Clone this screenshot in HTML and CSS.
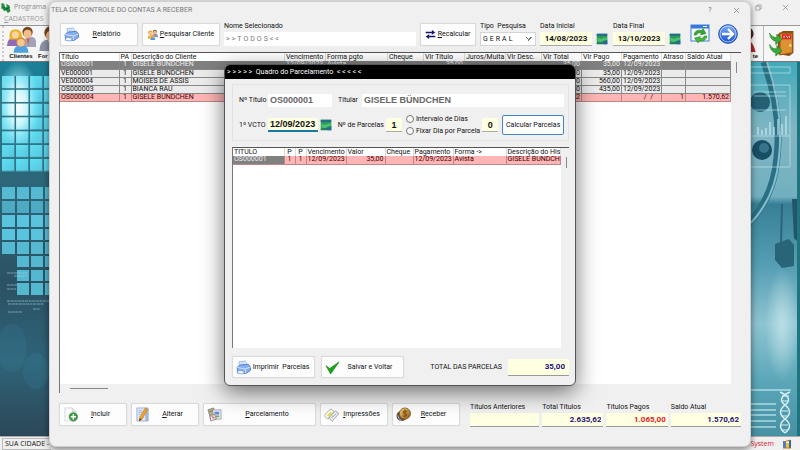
FILE: index.html
```html
<!DOCTYPE html>
<html lang="pt-BR">
<head>
<meta charset="utf-8">
<meta name="viewport" content="width=device-width, initial-scale=1">
<title>Tela de Controle do Contas a Receber</title>
<link rel="stylesheet" href="styles.css">
</head>
<body>
<svg class="sprites" aria-hidden="true">
  <defs>
    <linearGradient id="gBlue" x1="0" y1="0" x2="0" y2="1"><stop offset="0" stop-color="#7db0fa"/><stop offset="1" stop-color="#164fd0"/></linearGradient>
    <linearGradient id="gGold" x1="0" y1="0" x2="1" y2="1"><stop offset="0" stop-color="#f8d478"/><stop offset="1" stop-color="#8a5414"/></linearGradient>
    <symbol id="printer" viewBox="0 0 16 16">
      <path d="M3 2l7-1 2 5-7 2z" fill="#fff" stroke="#7ba4e0" stroke-width=".8"/>
      <path d="M4.500 3.500l4.500-.7M5 5l4.500-.8" stroke="#8fb6ee" stroke-width=".8"/>
      <path d="M1 8l3-2.500 9-1 2.500 3v3.500l-5 3.500L2 13z" fill="#86aef0" stroke="#3a68c4" stroke-width=".8"/>
      <path d="M1 8l9 1.500 5.500-2M10 9.500V14" stroke="#dce9ff" stroke-width=".9" fill="none"/>
      <path d="M3 11l6 1-2 3-6-1z" fill="#f6faff" stroke="#5a86d6" stroke-width=".7"/>
    </symbol>
    <symbol id="people" viewBox="0 0 16 16">
      <path d="M1 14q0-5 4-5t4 5z" fill="#e8b434"/><circle cx="5" cy="5.500" r="3.200" fill="#e0a020"/><circle cx="5.200" cy="6" r="2.100" fill="#f6cf9c"/>
      <path d="M8 12q0-5 4-5t4 5z" fill="#8c94b0"/><circle cx="11.500" cy="4" r="2.800" fill="#7a4a20"/><circle cx="11.500" cy="4.800" r="2.100" fill="#f2c090"/>
      <path d="M5 16q0-4 3.500-4t3.500 4z" fill="#4f9fe0"/><circle cx="8.500" cy="10" r="2.200" fill="#e2a45c"/>
    </symbol>
    <symbol id="swap" viewBox="0 0 16 16">
      <path d="M1 4h9V1.500L15 5l-5 3.500V6.300H1zM15 9.700H6V7.500L1 11l5 3.500V12h9z" fill="#15156c"/>
    </symbol>
    <symbol id="calendar" viewBox="0 0 16 16">
      <path d="M1 1h14v13.500H1z" fill="#2d9a56"/><path d="M1 1h14v3H1z" fill="#256f8c"/>
      <path d="M2 6q4 3 7 1t6 0v3q-4-1-6 1t-7 0z" fill="#49c271"/><path d="M1 13l8-1 6-3v6H1z" fill="#237a62"/><path d="M10 11h5v4h-5z" fill="#2c66a0"/>
    </symbol>
    <symbol id="refresh" viewBox="0 0 20 20">
      <rect x="1" y="1" width="18" height="16" fill="#f5fbff" stroke="#3d80d8"/><path d="M1 1h18v3.500H1z" fill="#3878d8"/><path d="M13 2.500h4" stroke="#fff"/>
      <path d="M4 11q1-6 8-4.500l1-2 3 5-5.500 1.500 1-2Q7 8 6.500 11z" fill="#36a82d" stroke="#17701b" stroke-width=".5"/>
      <path d="M17 12q-1 6-8 5l-1 2-3.500-5 6-1.500-1.200 2q4 .5 5-2.500z" fill="#49bc36" stroke="#17701b" stroke-width=".5"/>
    </symbol>
    <symbol id="go" viewBox="0 0 20 20">
      <circle cx="10" cy="10" r="9.300" fill="url(#gBlue)" stroke="#1d4cae"/><circle cx="10" cy="10" r="8" fill="none" stroke="#c7dcff" stroke-width=".8"/>
      <path d="M4 10h11M10 5l5 5-5 5" fill="none" stroke="#fff" stroke-width="2.300"/>
    </symbol>
    <symbol id="add" viewBox="0 0 16 16">
      <path d="M2 1h8l4 4v10H2z" fill="#fafafa" stroke="#d0d0d0" stroke-width=".8"/><path d="M10 1v4h4" fill="#e4e4e4" stroke="#c4c4c4" stroke-width=".6"/>
      <circle cx="11" cy="10.500" r="4.500" fill="#3c9d45" stroke="#237430" stroke-width=".6"/><path d="M11 7.700v5.600M8.200 10.500h5.600" stroke="#fff" stroke-width="1.600"/>
    </symbol>
    <symbol id="edit" viewBox="0 0 16 16">
      <path d="M2 1h12v14H2z" fill="#dce6f8" stroke="#8fa4cc" stroke-width=".8"/><path d="M4 4h4M4 6h4M4 8h2" stroke="#94a8d0" stroke-width=".8"/><path d="M11 2h3v13h-3z" fill="#a4b4d4"/>
      <path d="M11 1l2.500 1.500L7.500 13l-3 2 .5-3.500z" fill="#f4a425" stroke="#b86a14" stroke-width=".6"/><path d="M5 12l2 1.200L4.500 15z" fill="#503818"/>
    </symbol>
    <symbol id="papers" viewBox="0 0 16 16">
      <path d="M1 3l6-2 3 9-6 3z" fill="#a8ba80" stroke="#667" stroke-width=".7"/><path d="M6 3h9v10H7z" fill="#ece8f4" stroke="#889" stroke-width=".7"/>
      <path d="M8 5h5v3H8z" fill="#5c90d4"/><path d="M9 9h4v2H9z" fill="#70ad58"/><path d="M3 9l5-1 2 5-6 2z" fill="#e7d7e0" stroke="#866" stroke-width=".7"/><path d="M5 10l3 2M3 5l3-1" stroke="#c4494e"/>
    </symbol>
    <symbol id="slips" viewBox="0 0 16 16">
      <path d="M0 9l7-7 4 3-7 8z" fill="#fbfbf2" stroke="#8c8c7c" stroke-width=".7"/><path d="M3 9l4-4 2 1.500-4 4z" fill="#e2dc52"/>
      <path d="M5 12l7-8 4 3-7 8z" fill="#ececec" stroke="#888" stroke-width=".7"/><path d="M9 11l4-4M7.500 12l2-2" stroke="#999" stroke-width=".8"/>
    </symbol>
    <symbol id="coins" viewBox="0 0 16 16">
      <circle cx="6" cy="9.500" r="5.500" fill="#5c4c40"/><circle cx="9.500" cy="7" r="6" fill="url(#gGold)" stroke="#805018" stroke-width=".8"/><path d="M12 4.500H8.500q-2 2 1 2.500t1 2.500H7M9.700 3v8" fill="none" stroke="#805018" stroke-width="1.100"/><path d="M2 9q0 4 4 5.500" fill="none" stroke="#b8c0d0"/>
    </symbol>
    <symbol id="check" viewBox="0 0 16 16"><path d="M1 6l4 3 10-7L6 15z" fill="#18a817" stroke="#0b6f10" stroke-width=".6"/></symbol>
    <symbol id="clients" viewBox="0 0 32 28">
      <path d="M18 22q0-11 8-11t6 11z" fill="#a4a2ba"/><circle cx="23" cy="6" r="5.500" fill="#75451e"/><circle cx="23" cy="8" r="4.300" fill="#f3bd88"/><path d="M22 13h3l-1 7z" fill="#d35a50"/>
      <path d="M1 21q0-9 8-9t8 9z" fill="#9269b4"/><path d="M4 14Q2 3 10 3t7 11z" fill="#e9b521"/><circle cx="10" cy="9" r="3.800" fill="#fbd2a4"/>
      <path d="M8 28q0-8 8-8t8 8z" fill="#4fa2dd"/><circle cx="16" cy="16.500" r="5" fill="#d8923d"/><circle cx="16" cy="17.500" r="4" fill="#f6c68c"/>
    </symbol>
    <symbol id="supplier" viewBox="0 0 28 28"><path d="M0 26q0-12 10-12t12 12z" fill="#8c92a8"/><path d="M9 14l4 0-2 9z" fill="#fff"/><circle cx="12" cy="7" r="7" fill="#70421c"/><circle cx="12" cy="10" r="5.200" fill="#f3bd88"/></symbol>
    <symbol id="exit" viewBox="0 0 26 26">
      <path d="M9 4l5-3h10v21l-4 3-11-2z" fill="#8a4d15"/><path d="M11 3h12v19l-12 2z" fill="#dc9232" stroke="#965414"/><rect x="13" y="4" width="9" height="5" fill="#d62b2b"/><path d="M15 5.500v2M17 5.500l1.500 2M20 5.500v2" stroke="#fff" stroke-width=".8"/><circle cx="21" cy="15" r="1.200" fill="#faea9c"/>
      <path d="M1 3q3 5 7 4V4l5 5-6 5v-3Q2 10 1 3zM1 14q3 5 7 4v-3l5 5-6 5v-3q-5-1-6-8z" fill="#3da93a" stroke="#20782a" stroke-width=".6"/>
    </symbol>
  </defs>
</svg>

<div class="desktop">
  <header class="app-title">
    <svg class="app-logo" viewBox="0 0 12 12"><path d="M1 1l3 1 1 4 2-1-1-3 4 2v3l1 3-3 2-2-3-2 1-2-3-1 1z" fill="#218f3f"/><path d="M3 5l3 3 4-2" stroke="#0d5524" fill="none"/></svg>
    <span>Programa</span>
    <span class="app-controls"><svg viewBox="0 0 8 8"><path d="M1 2.500h4.500V7H1zM2.500 2.500V1H7v4.500H5.500" fill="none" stroke="#909090" stroke-width=".8"/></svg><svg viewBox="0 0 8 8"><path d="M1 1l6 6M7 1L1 7" stroke="#888" stroke-width=".8"/></svg></span>
  </header>
  <nav class="app-menu"><a href="#cadastros"><u>C</u>ADASTROS</a></nav>
  <div class="app-toolbar">
    <span class="grip"></span>
    <button class="tool" type="button"><svg><use href="#clients"/></svg>Clientes</button>
    <button class="tool next" type="button"><svg><use href="#supplier"/></svg>For</button>
    <span class="spacer"></span>
    <button class="tool suporte" type="button"><svg viewBox="0 0 28 28"><path d="M4 27q0-14 10-14t13 14z" fill="#b3262b"/><circle cx="18" cy="8" r="7" fill="#4a2520"/></svg>te</button>
    <button class="tool exit" type="button" aria-label="Sair"><svg><use href="#exit"/></svg></button>
  </div>
  <div class="wallpaper">
    <svg class="wall-left" viewBox="0 0 60 374" preserveAspectRatio="xMinYMin slice">
      <defs>
        <linearGradient id="wl" x1="0" y1="0" x2="0" y2="1"><stop offset="0" stop-color="#1c7f98"/><stop offset=".3" stop-color="#2c687a"/><stop offset=".6" stop-color="#2c5264"/><stop offset=".8" stop-color="#2f6378"/><stop offset="1" stop-color="#2c4858"/></linearGradient>
        <radialGradient id="glow"><stop offset="0" stop-color="#fff"/><stop offset=".4" stop-color="#dffcff" stop-opacity=".85"/><stop offset="1" stop-color="#80f0ff" stop-opacity="0"/></radialGradient>
        <linearGradient id="tile" x1="0" y1="0" x2="1" y2="1"><stop offset="0" stop-color="#5de2f2"/><stop offset="1" stop-color="#5ac4e0"/></linearGradient>
        <pattern id="tiles" x="2" y="14" width="14" height="13.800" patternUnits="userSpaceOnUse"><rect width="12.600" height="12.300" fill="url(#tile)"/></pattern>
      </defs>
      <rect width="60" height="374" fill="url(#wl)"/>
      <path d="M2 14h58v96H2z" fill="url(#tiles)"/>
      <ellipse cx="18" cy="44" rx="22" ry="46" fill="url(#glow)"/>
      <path d="M1 14v96M15.300 14v96M29.300 14v96M43.300 14v96M0 27h60M0 40.800h60M0 54.600h60M0 68.400h60M0 82.200h60M0 96h60" stroke="#2f7588" stroke-width="1.500"/>
      <g fill="#5ac3dd"><path d="M2 125h13v12H2zM17 125h12v12H17zM31 125h12v12H31zM45 125h15v12H45z" opacity=".9"/><path d="M2 139h13v12H2zM17 139h12v12H17zM31 139h12v12H31zM45 139h15v12H45z" opacity=".75"/><path d="M2 153h13v12H2zM17 153h12v12H17zM31 153h12v12H31zM45 153h15v12H45zM2 167h13v11H2zM17 167h12v11H17zM31 167h12v11H31zM45 167h15v11H45z"/><path d="M2 180h13v12H2zM17 180h12v12H17zM31 180h12v12H31zM45 180h15v12H45zM17 194h12v11H17zM31 194h12v11H31zM45 194h15v11H45zM17 208h12v11H17zM31 208h12v11H31zM45 208h15v11H45zM17 221h12v12H17zM31 221h12v12H31zM45 221h15v12H45z" opacity=".9"/></g>
      <path d="M7 211h20M14 214h13M7 223h10M7 227h9M7 239h50M8 242h36M8 250h14M33 247h7" stroke="#a5dce8" stroke-width="1" opacity=".6" stroke-dasharray="3 .6"/>
      <ellipse cx="12" cy="286" rx="15" ry="24" fill="#3587a3" opacity=".2"/><ellipse cx="36" cy="309" rx="13" ry="18" fill="#3587a3" opacity=".2"/>
    </svg>
    <svg class="wall-right" viewBox="0 0 60 374" preserveAspectRatio="xMaxYMin slice">
      <defs><linearGradient id="wr" x1="0" y1="0" x2="0" y2="1"><stop offset="0" stop-color="#43a9ba"/><stop offset=".18" stop-color="#80b5c3"/><stop offset=".36" stop-color="#72b0bf"/><stop offset=".38" stop-color="#367f95"/><stop offset=".55" stop-color="#579fb4"/><stop offset=".7" stop-color="#8ec4d1"/><stop offset=".85" stop-color="#5ba7b9"/><stop offset="1" stop-color="#4790a4"/></linearGradient>
      <radialGradient id="haze"><stop offset="0" stop-color="#c6e5eb" stop-opacity=".8"/><stop offset="1" stop-color="#c6e5eb" stop-opacity="0"/></radialGradient></defs>
      <rect width="60" height="374" fill="url(#wr)"/>
      <path d="M24 0q18 50 13 95-3 39-28 66" fill="none" stroke="#2a7084" stroke-width="7"/><path d="M27 0q17 50 12 95-3 39-28 66" fill="none" stroke="#86bccb" stroke-width="2"/>
      <path d="M52 137h8v45l-6-6z" fill="#24546a"/><path d="M42 142l-1 40" stroke="#2d6479" stroke-width="2"/><path d="M35 182l14-5 5 6v21l-12 2-7-8z" fill="#2a6479"/>
      <circle cx="20" cy="40" r="10" fill="#245f74"/><circle cx="22" cy="88" r="10" fill="#194f66"/><circle cx="24" cy="86" r="5" fill="#37748a"/>
      <g stroke="#c8f0f4" fill="none" opacity=".75"><path d="M10 5h40v6H10M10 23h40v82H10M10 74h40M14 30h32M14 34h32M14 48h32" stroke-width=".8"/><path d="M18 73v-8M22 73v-5M26 73v-7M30 73V60M34 73v-8M38 73V57M42 73V62M46 73V54" stroke-width="1.500"/><path d="M8 328h43M8 342h28M8 348h28M8 353h28M8 359h28M8 365h28" stroke-width="1.500"/></g>
      <ellipse cx="42" cy="263" rx="17" ry="57" fill="url(#haze)"/>
      <path d="M40 330q14 6 5 13t0 14 0 14M50 330q-14 6-5 13t0 14 0 14" fill="none" stroke="#d5f0f4" stroke-width="1.500"/><path d="M42 334h7M42 339h6M41 349h7M41 354h7M41 363h7M41 368h7" stroke="#d5f0f4"/>
      <path d="M58.500 0v374" stroke="#1f7480" stroke-width="3"/>
    </svg>
  </div>
  <footer class="app-status"><span class="city">SUA CIDADE -</span><span class="system">System</span><svg viewBox="0 0 10 10"><path d="M1 2h3v7H1z" fill="#4c7ec9"/><path d="M4 4h3v5H4z" fill="#ecc43a"/><path d="M7 1h2v8H7z" fill="#3867a6"/><path d="M1 9h8M2 3l6-2" stroke="#af7b29"/></svg></footer>
</div>

<main class="window">
  <header class="window-title"><h1>TELA DE CONTROLE DO CONTAS A RECEBER</h1><button type="button" aria-label="Ajuda">?</button><button type="button" aria-label="Fechar"><svg viewBox="0 0 8 8"><path d="M1 1l6 6M7 1L1 7" stroke="#777" stroke-width=".8"/></svg></button></header>

  <form class="filters">
    <button class="btn w-report" type="button"><svg><use href="#printer"/></svg><span><u>R</u>elatório</span></button>
    <button class="btn w-report" type="button"><svg class="small"><use href="#people"/></svg><span><u>P</u>esquisar Cliente</span></button>
    <div class="field grow"><label for="nome">Nome Selecionado</label><input id="nome" class="spaced" value="&gt;&gt;TODOS&lt;&lt;"></div>
    <button class="btn w-recalc" type="button"><svg class="small"><use href="#swap"/></svg><span><u>R</u>ecalcular</span></button>
    <div class="field w-type"><label for="tipo">Tipo&nbsp; Pesquisa</label><select id="tipo"><option>GERAL</option></select></div>
    <div class="field"><label for="ini">Data Inicial</label><div class="date"><input id="ini" value="14/08/2023"><svg><use href="#calendar"/></svg></div></div>
    <div class="field"><label for="fim">Data Final</label><div class="date"><input id="fim" value="13/10/2023"><svg><use href="#calendar"/></svg></div></div>
    <button class="round" type="button" aria-label="Atualizar"><svg><use href="#refresh"/></svg></button>
    <button class="round" type="button" aria-label="Avançar"><svg><use href="#go"/></svg></button>
  </form>

  <section class="grid-box">
    <div class="grid-area">
      <table class="grid main-grid">
        <thead><tr><th>Título</th><th>PA</th><th>Descrição do Cliente</th><th>Vencimento</th><th>Forma pgto</th><th>Cheque</th><th>Vlr Título</th><th>Juros/Multa</th><th>Vlr Desc.</th><th>Vlr Total</th><th>Vlr Pago</th><th>Pagamento</th><th>Atraso</th><th>Saldo Atual</th></tr></thead>
        <tbody>
          <tr class="selected"><td>OS000001</td><td>1</td><td>GISELE BÜNDCHEN</td><td>12/09/2023</td><td>Avista</td><td></td><td>35,00</td><td></td><td></td><td>35,00</td><td>35,00</td><td>12/09/2023</td><td></td><td></td></tr>
          <tr><td>VE000001</td><td>1</td><td>GISELE BÜNDCHEN</td><td></td><td></td><td></td><td></td><td></td><td></td><td>35,00</td><td>35,00</td><td>12/09/2023</td><td></td><td></td></tr>
          <tr><td>VE000004</td><td>1</td><td>MOISES DE ASSIS</td><td></td><td></td><td></td><td></td><td></td><td></td><td>560,00</td><td>560,00</td><td>12/09/2023</td><td></td><td></td></tr>
          <tr><td>OS000003</td><td>1</td><td>BIANCA RAU</td><td></td><td></td><td></td><td></td><td></td><td></td><td>435,00</td><td>435,00</td><td>12/09/2023</td><td></td><td></td></tr>
          <tr class="open"><td>OS000004</td><td>1</td><td>GISELE BÜNDCHEN</td><td></td><td></td><td></td><td></td><td></td><td></td><td>1.570,62</td><td></td><td>/ &nbsp;/ &nbsp; &nbsp;</td><td>1</td><td>1.570,62</td></tr>
        </tbody>
      </table>
    </div>
    <div class="vbar"></div>
    <div class="hbar"></div>
  </section>

  <footer class="actions">
    <button class="btn w-s" type="button"><svg><use href="#add"/></svg><span><u>I</u>ncluir</span></button>
    <button class="btn w-s" type="button"><svg><use href="#edit"/></svg><span><u>A</u>lterar</span></button>
    <button class="btn w-l" type="button"><svg><use href="#papers"/></svg><span><u>P</u>arcelamento</span></button>
    <button class="btn w-s" type="button"><svg><use href="#slips"/></svg><span><u>I</u>mpressões</span></button>
    <button class="btn w-s" type="button"><svg><use href="#coins"/></svg><span><u>R</u>eceber</span></button>
    <div class="totals">
      <div class="field"><label for="ant">Títulos Anteriores</label><input id="ant" class="total"></div>
      <div class="field"><label for="tot">Total Títulos</label><input id="tot" class="total" value="2.635,62"></div>
      <div class="field"><label for="pag">Títulos Pagos</label><input id="pag" class="total red" value="1.065,00"></div>
      <div class="field"><label for="sal">Saldo Atual</label><input id="sal" class="total" value="1.570,62"></div>
    </div>
  </footer>
</main>

<section class="dialog" role="dialog" aria-labelledby="dlg">
  <h2 id="dlg">&gt; &gt; &gt; &gt; &gt;&nbsp; Quadro do Parcelamento &nbsp;&lt; &lt; &lt; &lt; &lt;</h2>
  <form class="dialog-body">
    <fieldset class="panel">
      <div class="line">
        <label class="lead" for="num">Nº Título</label><input id="num" class="plain w-num" value="OS000001">
        <label class="next-label" for="titular">Titular</label><input id="titular" class="plain grow" value="GISELE BÜNDCHEN">
      </div>
      <div class="line second">
        <label class="lead" for="vcto">1º VCTO</label><input id="vcto" class="yellow w-vcto" value="12/09/2023"><svg class="cal"><use href="#calendar"/></svg>
        <label class="next-label" for="parc">Nº de Parcelas</label><input id="parc" class="yellow w-one" value="1">
        <div class="radios"><label><input type="radio" name="modo">Intervalo de Dias</label><label><input type="radio" name="modo">Fixar Dia por Parcela</label></div>
        <input class="yellow w-one" aria-label="Dias" value="0">
        <button class="calc" type="button">Calcular Parcelas</button>
      </div>
    </fieldset>
    <div class="grid-box parcels">
      <div class="grid-area">
        <table class="grid sub-grid">
          <thead><tr><th>TITULO</th><th>P</th><th>P</th><th>Vencimento</th><th>Valor</th><th>Cheque</th><th>Pagamento</th><th>Forma -&gt;</th><th>Descrição do His</th></tr></thead>
          <tbody><tr class="open"><td class="current">OS000001</td><td>1</td><td>1</td><td>12/09/2023</td><td>35,00</td><td></td><td>12/09/2023</td><td>Avista</td><td>GISELE BUNDCH</td></tr></tbody>
        </table>
      </div>
      <div class="vbar"></div>
    </div>
    <div class="dialog-actions">
      <button class="btn" type="button"><svg><use href="#printer"/></svg><span>Imprimir&nbsp; Parcelas</span></button>
      <button class="btn" type="button"><svg><use href="#check"/></svg><span>Salvar e Voltar</span></button>
      <label for="sum">TOTAL DAS PARCELAS</label><input id="sum" class="total" value="35,00">
    </div>
  </form>
</section>
</body>
</html>
```
FILE: styles.css
```css
:root {
  --ui: Roboto, "Liberation Sans", sans-serif;
  --face: #f0f0f0;
  --cream: #ffffe1;
  --navy: #20107a;
}
* { box-sizing: border-box; }
body { margin: 0; height: 100vh; overflow: hidden; background: #ececec; font: 7px/9px var(--ui); color: #111; }
button, input, select { font: inherit; color: inherit; margin: 0; padding: 0; border: 0; border-radius: 0; min-width: 0; }
button { background: none; }
h1, h2 { margin: 0; font-weight: normal; }
.sprites { position: absolute; width: 0; height: 0; }
svg { flex: none; }

/* Application behind the windows */
.desktop { height: 100%; display: flex; flex-direction: column; background: #f1f1f1; }
.app-title { display: flex; align-items: center; gap: 2px; height: 14px; font: 7px/10px "Open Sans", sans-serif; color: #8c8c8c; }
.app-logo { width: 12px; height: 11px; }
.app-controls { margin-left: auto; display: flex; gap: 20px; padding-right: 11px; }
.app-controls svg { width: 7px; height: 7px; }
.app-menu { height: 11px; padding-left: 4px; font: 7px/10px "Open Sans", sans-serif; }
.app-menu a { color: #999; text-decoration: none; }
.app-toolbar { display: flex; gap: 2px; height: 37px; border-top: 1px solid #999; border-bottom: 1px solid #777; background: #f6f6f6; padding-right: 2px; }
.grip { width: 4px; border-right: 2px dotted #ccc; }
.spacer { flex: 1; }
.tool { display: flex; flex-direction: column; align-items: center; font: bold 6px/7px "Liberation Sans", sans-serif; }
.tool svg { width: 30px; height: 27px; }
.tool.next { align-items: flex-start; }
.tool.suporte { width: 34px; align-items: flex-end; padding-right: 5px; border-right: 1px solid #bbb; }
.tool.exit { justify-content: center; width: 32px; }
.wallpaper { flex: 1; min-height: 0; display: flex; justify-content: space-between; background: #3c8296; }
.wallpaper svg { width: 60px; height: 100%; }
.app-status { display: flex; align-items: center; gap: 8px; height: 14px; padding: 0 8px 0 2px; border-top: 1px solid #aaa; background: #f0f0f0; font: 7px/10px "Open Sans", sans-serif; }
.city { border: 1px solid #bbb; border-right: 0; padding: 0 2px; }
.system { margin-left: auto; color: #d8232e; }
.app-status svg { width: 10px; height: 10px; }

/* Receivables window */
.window { position: absolute; inset: 1px 49px 3px; display: flex; flex-direction: column; background: var(--face); border: 1px solid #cfcfcf; border-radius: 7px; box-shadow: 0 2px 7px rgba(0, 0, 0, .5); padding: 0 9px 20px; }
.window-title { display: flex; align-items: center; height: 16px; color: #777; }
.window-title h1 { flex: 1; margin-left: -8px; font: 7px/10px var(--ui); }
.window-title button { width: 26px; height: 12px; display: grid; place-items: center; }
.window-title button:last-child { margin-right: -8px; }
.window-title svg { width: 7px; height: 7px; }
.filters { display: flex; align-items: center; gap: 4px; height: 32px; padding: 0 3px 0 1px; }
.btn { display: flex; align-items: center; height: 23px; padding: 0 3px; background: #fdfdfd; border: 1px solid #dadada; border-radius: 2px; box-shadow: 0 0 1px #ccc; }
.btn svg { width: 15px; height: 15px; }
.btn svg.small { width: 11px; height: 11px; margin-left: 1px; }
.btn span { flex: 1; text-align: center; white-space: nowrap; }
.w-report { width: 78px; }
.w-recalc { width: 56px; }
.field { display: flex; flex-direction: column; gap: 1px; }
.field label, .line label, .dialog-actions label { white-space: nowrap; }
.grow { flex: 1; }
.field input { height: 14px; padding: 0 2px; background: #fff; }
input.spaced { color: #777; letter-spacing: 2px; }
.w-type { width: 56px; }
select { height: 14px; padding: 0 2px; background: #fff; border: 1px solid #d4d4d4; letter-spacing: 2px; appearance: none; background-image: linear-gradient(45deg, transparent 50%, #777 50%, #777 64%, transparent 64%), linear-gradient(-45deg, transparent 50%, #777 50%, #777 64%, transparent 64%); background-size: 4px 4px; background-position: right 6px center, right 3px center; background-repeat: no-repeat; }
.date { display: flex; align-items: center; gap: 4px; padding-right: 1px; }
.field .date input { width: 52px; background: var(--cream); border-bottom: 1px solid #aaa; font: bold 8px/12px var(--ui); text-align: center; }
.date svg { width: 12px; height: 12px; }
.round { width: 20px; height: 20px; margin-left: 4px; }
.round svg { width: 20px; height: 20px; }

.grid-box { display: grid; grid-template-columns: 1fr 10px; grid-template-rows: 1fr 9px; border-top: 1px solid #555; border-left: 1px solid #777; background: var(--face); }
.window > .grid-box { flex: 1; margin-top: 2px; min-height: 0; }
.grid-area { background: #fff; overflow: hidden; min-width: 0; min-height: 0; }
.vbar { padding: 9px 0 0 5px; }
.vbar::before, .hbar::before { content: ""; display: block; background: #888; }
.vbar::before { width: 1px; height: 11px; }
.hbar { padding: 4px 0 0 10px; }
.hbar::before { width: 38px; height: 1px; }
.grid { width: 100%; border-collapse: collapse; table-layout: fixed; }
.grid th, .grid td { height: 8px; padding: 0 1px; line-height: 7px; white-space: nowrap; overflow: hidden; text-align: left; font-weight: normal; }
.grid th { line-height: 8px; border-right: 1px solid #ddd; }
.grid td { border-right: 1px solid #888; border-bottom: 1px solid #888; background: #ebebeb; }
.grid .open td { background: #ffb5b5; border-color: #b88; color: #400; }
.grid .selected td, .grid .open td.current { background: #808080; color: #eee; }
.main-grid th:nth-child(1) { width: 59px; }
.main-grid th:nth-child(2) { width: 12px; }
.main-grid th:nth-child(4) { width: 41px; }
.main-grid th:nth-child(5) { width: 62px; }
.main-grid th:nth-child(6) { width: 36px; }
.main-grid th:nth-child(7) { width: 41px; }
.main-grid th:nth-child(8) { width: 41px; }
.main-grid th:nth-child(9) { width: 36px; }
.main-grid th:nth-child(10) { width: 40px; }
.main-grid th:nth-child(11) { width: 40px; }
.main-grid th:nth-child(12) { width: 40px; }
.main-grid th:nth-child(13) { width: 24px; }
.main-grid th:nth-child(14) { width: 45px; }
.main-grid td:nth-child(2), .sub-grid td:nth-child(2), .sub-grid td:nth-child(3) { text-align: center; }
.main-grid td:nth-child(n+7), .sub-grid td:nth-child(5) { text-align: right; }
.sub-grid th:nth-child(1) { width: 51px; }
.sub-grid th:nth-child(2), .sub-grid th:nth-child(3) { width: 11px; text-align: center; }
.sub-grid th:nth-child(4) { width: 40px; }
.sub-grid th:nth-child(5) { width: 39px; }
.sub-grid th:nth-child(6) { width: 28px; }
.sub-grid th:nth-child(7) { width: 40px; }
.sub-grid th:nth-child(8) { width: 53px; }

.actions { display: flex; align-items: center; gap: 4px; height: 33px; padding-top: 10px; }
.w-s { flex: 0 0 68px; }
.w-l { flex: 0 0 113px; }
.totals { flex: 1; display: grid; grid-template-columns: 69fr 61fr 61fr 70fr; gap: 3px; margin-left: 6px; }
.total { width: 100%; background: var(--cream); color: var(--navy); font: bold 8px/12px var(--ui); text-align: right; }
.field input.total { background: var(--cream); border-bottom: 1px solid #999; }
.field input.total.red { color: #e3202b; }

/* Instalment dialog */
.dialog { position: absolute; inset: 64px 28% 64px; display: flex; flex-direction: column; overflow: hidden; background: var(--face); border: 1px solid #555; border-radius: 6px; box-shadow: 0 6px 22px rgba(0, 0, 0, .55); }
.dialog h2 { height: 14px; padding-left: 2px; background: #000; color: #fff; font: 7px/14px var(--ui); white-space: pre; }
.dialog-body { flex: 1; min-height: 0; display: flex; flex-direction: column; padding: 5px 6px 7px 7px; }
.panel { margin: 0; padding: 8px 4px 4px 6px; border: 1px solid #e2e2e2; min-width: 0; }
.line { display: flex; align-items: center; gap: 2px; height: 14px; }
.line .lead { width: 27px; }
.line.second { height: 22px; margin-top: 7px; }
.next-label { margin-left: 4px; }
.line:not(.second) .next-label { margin-right: 2px; }
.plain { height: 13px; background: #fff; padding: 0 2px; color: #666; font: bold 9px/12px "Liberation Sans", sans-serif; }
.w-num { width: 64px; }
.yellow { flex: none; height: 14px; background: var(--cream); border-bottom: 1px solid #aaa; font: bold 9px/12px "Liberation Sans", sans-serif; text-align: center; }
.w-vcto { width: 50px; border-bottom: 2px solid #187a9a; }
.w-one { width: 16px; }
.cal { width: 12px; height: 12px; }
.radios { flex: 1; display: flex; flex-direction: column; gap: 3px; margin-left: 2px; }
.radios label { display: flex; align-items: center; gap: 2px; }
.radios input { appearance: none; width: 8px; height: 8px; border: 1px solid #777; border-radius: 50%; background: #fafafa; }
.calc { flex: none; width: 62px; height: 20px; margin-left: 2px; background: #fdfdfd; border: 1px solid #3e86c6; border-radius: 2px; white-space: nowrap; }
.parcels { flex: 1; min-height: 0; margin-top: 6px; grid-template-columns: 1fr 8px; grid-template-rows: 1fr; }
.dialog-actions { display: flex; align-items: center; gap: 6px; margin-top: 8px; }
.dialog-actions .btn { width: 83px; height: 22px; }
.dialog-actions label { margin-left: auto; }
.dialog-actions .total { width: 61px; height: 17px; padding: 0 4px; border-bottom: 1px solid #999; }
```
